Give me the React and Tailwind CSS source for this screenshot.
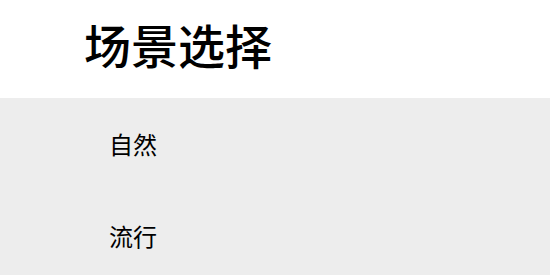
export default function App() {
  const items = ["自然", "流行"];
  return (
    <div className="w-[550px] h-[275px] overflow-hidden bg-[#ededed]" style={{ fontFamily: '"Noto Sans CJK SC", "Noto Sans", sans-serif' }}>
      <div className="h-[98px] bg-white flex items-start pt-[20px] pl-[84px]">
        <h1 className="text-[47px] leading-none text-black font-medium">场景选择</h1>
      </div>
      <div className="flex flex-col">
        {items.map((t) => (
          <div key={t} className="h-[92px] flex items-center pl-[109px]">
            <span className="text-[24px] leading-none text-black">{t}</span>
          </div>
        ))}
      </div>
    </div>
  );
}
